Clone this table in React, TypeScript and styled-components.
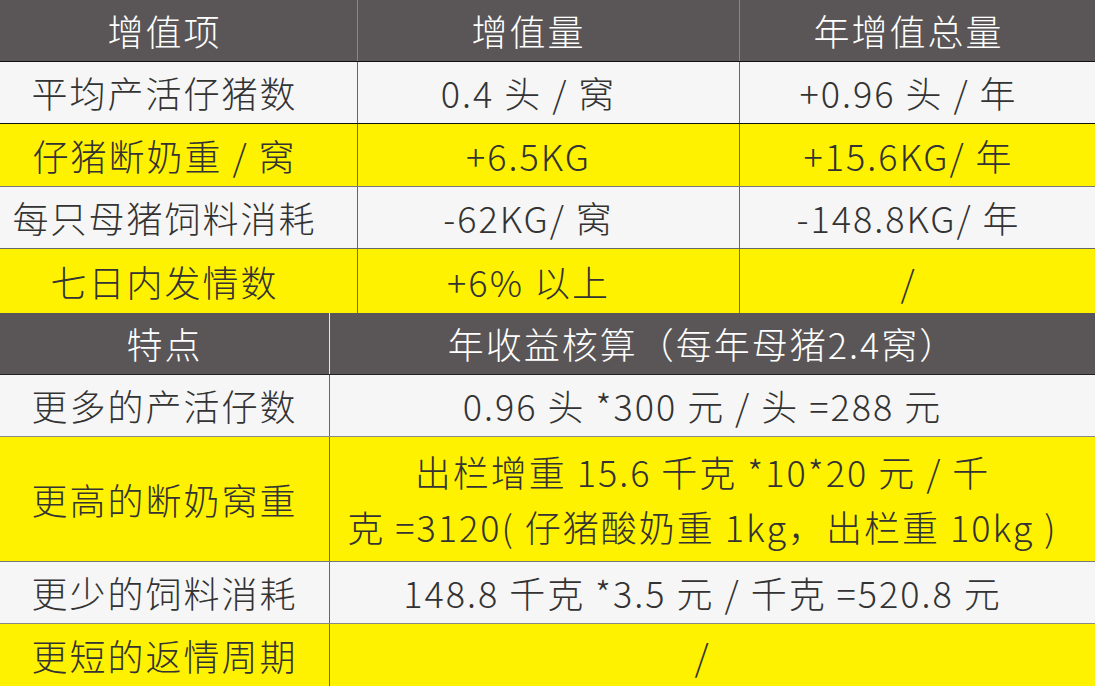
import React from 'react';
import styled, { createGlobalStyle } from 'styled-components';

const GlobalStyle = createGlobalStyle`
  html, body {
    margin: 0;
    padding: 0;
    background: #f6f6f6;
  }
  body {
    font-family: "Noto Sans CJK SC", "Noto Sans", sans-serif;
    color: #333333;
  }
`;

type Tone = 'head' | 'light' | 'yellow';

const toneBg: Record<Tone, string> = {
  head: '#5a5657',
  light: '#f6f6f6',
  yellow: '#fff200',
};

const Sheet = styled.div`
  width: 1095px;
  height: 686px;
  display: flex;
  flex-direction: column;
  overflow: hidden;
`;

const Table = styled.div`
  display: flex;
  flex-direction: column;
`;

// one row of the table; columns come from the parent table
const Row = styled.div<{ cols: string; tone: Tone; h: number; line?: string }>`
  display: grid;
  grid-template-columns: ${(p) => p.cols};
  height: ${(p) => p.h}px;
  box-sizing: border-box;
  background: ${(p) => toneBg[p.tone]};
  color: ${(p) => (p.tone === 'head' ? '#ffffff' : '#333333')};
  border-bottom: ${(p) => (p.line ? `1px solid ${p.line}` : 'none')};
`;

const Cell = styled.div<{ padR?: number; divider?: string }>`
  display: flex;
  align-items: center;
  justify-content: center;
  text-align: center;
  font-size: 36px;
  font-weight: 300;
  line-height: 55px;
  letter-spacing: 2px;
  padding-right: ${(p) => p.padR ?? 0}px;
  border-left: ${(p) => (p.divider ? `1.5px solid ${p.divider}` : 'none')};
  white-space: nowrap;
`;

const topCols = '357px 382px 1fr';
const bottomCols = '329px 1fr';

const topRows: { tone: Tone; line?: string; h: number; cells: string[] }[] = [
  { tone: 'light', line: '#111', h: 62, cells: ['平均产活仔猪数', '0.4 头 / 窝', '+0.96 头 / 年'] },
  { tone: 'yellow', line: '#777', h: 63, cells: ['仔猪断奶重 / 窝', '+6.5KG', '+15.6KG/ 年'] },
  { tone: 'light', line: '#666', h: 62, cells: ['每只母猪饲料消耗', '-62KG/ 窝', '-148.8KG/ 年'] },
  { tone: 'yellow', h: 64, cells: ['七日内发情数', '+6% 以上', '/'] },
];

const pads = [28, 40, 18];

const App: React.FC = () => {
  return (
    <>
      <GlobalStyle />
      <Sheet>
        <Table>
          <Row cols={topCols} tone="head" h={62} line="#111">
            <Cell padR={pads[0]}>增值项</Cell>
            <Cell padR={pads[1]} divider="#8a8788">增值量</Cell>
            <Cell padR={pads[2]} divider="#8a8788">年增值总量</Cell>
          </Row>
          {topRows.map((r) => (
            <Row key={r.cells[0]} cols={topCols} tone={r.tone} h={r.h} line={r.line}>
              {r.cells.map((c, i) => (
                <Cell key={i} padR={pads[i]} divider={i > 0 ? '#666' : undefined}>
                  {c}
                </Cell>
              ))}
            </Row>
          ))}
        </Table>
        <Table>
          <Row cols={bottomCols} tone="head" h={62} line="#222">
            <Cell>特点</Cell>
            <Cell padR={20} divider="#e6e6e6">年收益核算（每年母猪2.4窝）</Cell>
          </Row>
          <Row cols={bottomCols} tone="light" h={62} line="#888">
            <Cell>更多的产活仔数</Cell>
            <Cell padR={20} divider="#666">0.96 头 *300 元 / 头 =288 元</Cell>
          </Row>
          <Row cols={bottomCols} tone="yellow" h={125} line="#777">
            <Cell>更高的断奶窝重</Cell>
            <Cell padR={20} divider="#666">
              出栏增重 15.6 千克 *10*20 元 / 千
              <br />
              克 =3120( 仔猪酸奶重 1kg，出栏重 10kg )
            </Cell>
          </Row>
          <Row cols={bottomCols} tone="light" h={62} line="#888">
            <Cell>更少的饲料消耗</Cell>
            <Cell padR={20} divider="#666">148.8 千克 *3.5 元 / 千克 =520.8 元</Cell>
          </Row>
          <Row cols={bottomCols} tone="yellow" h={63}>
            <Cell>更短的返情周期</Cell>
            <Cell padR={20} divider="#666">/</Cell>
          </Row>
        </Table>
      </Sheet>
    </>
  );
};

export default App;
